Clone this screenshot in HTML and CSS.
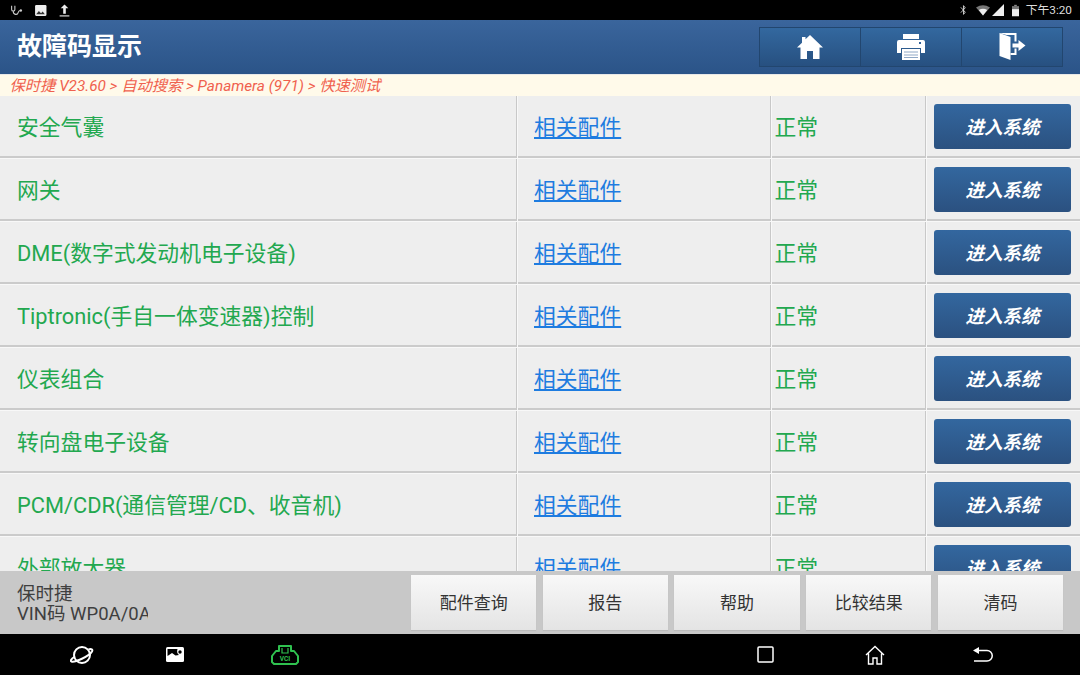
FILE: index.html
```html
<!DOCTYPE html>
<html lang="zh">
<head>
<meta charset="utf-8">
<title>故障码显示</title>
<link rel="stylesheet" href="styles.css">
</head>
<body>
<div class="app">
  <div class="status">
    <div class="status-left">
      <svg class="i12" viewBox="0 0 12 12"><path d="M1.5 1.5v3.5c0 2 3 2 3 0V1.500M3 7c0 3 4 3.500 4.500 1 .3-1.500 1-2 2-2" fill="none" stroke="#ccc" stroke-width="1"/><circle cx="10" cy="6" r="1.100" fill="#ccc"/></svg>
      <svg class="i12" viewBox="0 0 12 12"><rect x="1" y="1" width="10.500" height="10" rx="1" fill="#eee"/><path d="M2 9.500l2.500-3 2 2 1.500-1.500 2 2.500z" fill="#333"/></svg>
      <svg class="i12" viewBox="0 0 12 12"><path d="M6 .5L9.500 4H7.200v5H4.800V4H2.500z" fill="#eee"/><rect x="1.500" y="10.500" width="9" height="1" fill="#eee"/></svg>
    </div>
    <div class="status-right">
      <svg class="bt" viewBox="0 0 8 12"><path d="M1 3l5 5.500L4 11V1l2 2.500L1 9" fill="none" stroke="#ddd" stroke-width="1"/></svg>
      <svg class="wifi" viewBox="0 0 14 11"><path d="M0 2.500Q7-2 14 2.500L7 10.500z" fill="#777"/><path d="M2.800 5Q7 2.300 11.200 5L7 10.500z" fill="#eee"/></svg>
      <svg class="signal" viewBox="0 0 12 12"><path d="M12 0v12H0z" fill="#eee"/></svg>
      <svg class="battery" viewBox="0 0 8 13"><rect x="2.500" y="0" width="3" height="1.500" fill="#888"/><rect x="0" y="1.500" width="8" height="11.500" fill="#777"/><rect x="0" y="5" width="8" height="8" fill="#eee"/></svg>
      <span class="clock">下午3:20</span>
    </div>
  </div>

  <header class="header">
    <h1 class="title">故障码显示</h1>
    <div class="toolbar">
      <button class="tool">
        <svg class="home-icon" viewBox="0 0 26 24"><path d="M13 0L26 12.500h-3.500V24H16v-8h-6v8H3.500V12.500H0L5 7.700V2h3.500v2.300z" fill="#fff"/></svg>
      </button>
      <button class="tool">
        <svg class="print-icon" viewBox="0 0 28 26"><path d="M6 0h16v5H6z" fill="#fff"/><path d="M2 6h24a2 2 0 0 1 2 2v11h-4v-5H4v5H0V8a2 2 0 0 1 2-2z" fill="#fff"/><rect x="22" y="8" width="2" height="2" fill="#2f6098"/><path d="M5 15h18v11H5z" fill="#fff"/><path d="M7 18h14M7 21h14M7 23.500h14" stroke="#8fa8c6" stroke-width="1"/></svg>
      </button>
      <button class="tool">
        <svg class="exit-icon" viewBox="0 0 26 27"><path d="M0 0h17v8.500h-2V2H7zM15 15.500h2V22h-6v-2h4z" fill="#fff"/><path d="M0 0l11 4v23L0 23z" fill="#fff"/><path d="M13 10.500h6V7l7 5.500-7 5.500v-3.500h-6z" fill="#fff"/></svg>
      </button>
    </div>
  </header>

  <div class="crumb">保时捷 V23.60 &gt; 自动搜索 &gt; Panamera (971) &gt; 快速测试</div>

  <main class="list">
    <div class="row"><div class="cell name">安全气囊</div><div class="cell link"><a>相关配件</a></div><div class="cell state">正常</div><div class="cell action"><button class="enter">进入系统</button></div></div>
    <div class="row"><div class="cell name">网关</div><div class="cell link"><a>相关配件</a></div><div class="cell state">正常</div><div class="cell action"><button class="enter">进入系统</button></div></div>
    <div class="row"><div class="cell name">DME(数字式发动机电子设备)</div><div class="cell link"><a>相关配件</a></div><div class="cell state">正常</div><div class="cell action"><button class="enter">进入系统</button></div></div>
    <div class="row"><div class="cell name">Tiptronic(手自一体变速器)控制</div><div class="cell link"><a>相关配件</a></div><div class="cell state">正常</div><div class="cell action"><button class="enter">进入系统</button></div></div>
    <div class="row"><div class="cell name">仪表组合</div><div class="cell link"><a>相关配件</a></div><div class="cell state">正常</div><div class="cell action"><button class="enter">进入系统</button></div></div>
    <div class="row"><div class="cell name">转向盘电子设备</div><div class="cell link"><a>相关配件</a></div><div class="cell state">正常</div><div class="cell action"><button class="enter">进入系统</button></div></div>
    <div class="row"><div class="cell name">PCM/CDR(通信管理/CD、收音机)</div><div class="cell link"><a>相关配件</a></div><div class="cell state">正常</div><div class="cell action"><button class="enter">进入系统</button></div></div>
    <div class="row"><div class="cell name">外部放大器</div><div class="cell link"><a>相关配件</a></div><div class="cell state">正常</div><div class="cell action"><button class="enter">进入系统</button></div></div>
  </main>

  <div class="bottom">
    <div class="vehicle">
      <div>保时捷</div>
      <div>VIN码 WP0A/0A</div>
    </div>
    <div class="actions">
      <button class="act">配件查询</button>
      <button class="act">报告</button>
      <button class="act">帮助</button>
      <button class="act">比较结果</button>
      <button class="act">清码</button>
    </div>
  </div>

  <nav class="nav">
    <div class="nav-left">
      <svg class="planet" viewBox="0 0 24 20"><circle cx="12" cy="10" r="8" fill="none" stroke="#fff" stroke-width="2"/><path d="M5 11.500C1 14 0 16 1.500 16.500C5 17.500 19 11.500 22 6.500C23 4.500 21.500 3.500 18.500 4.500" fill="none" stroke="#fff" stroke-width="2"/></svg>
      <svg class="gallery" viewBox="0 0 18 15"><rect width="18" height="15" rx="1.500" fill="#fff"/><path d="M1.500 2H11.500C10.500 5 11.500 7 13 8L9.500 8.500 6 6 1.500 9z" fill="#000"/><circle cx="14" cy="5" r="1.700" fill="#000"/></svg>
      <svg class="vci" viewBox="0 0 28 20"><path d="M8 1h12v5h3l4 5v6l-2 2H3l-2-2v-6l4-5h3z" fill="none" stroke="#2fc14f" stroke-width="2" stroke-linejoin="round"/><path d="M11 3v5h6V3" fill="none" stroke="#2fc14f" stroke-width="1.200"/><text x="14" y="16" class="vci-text" text-anchor="middle">VCI</text></svg>
    </div>
    <div class="nav-right">
      <svg class="recent" viewBox="0 0 17 17"><rect x="1" y="1" width="15" height="15" rx="1" fill="none" stroke="#fff" stroke-width="1.500"/></svg>
      <svg class="homeout" viewBox="0 0 20 20"><path d="M1 10L10 1.500 19 10M3.500 8.500V19H8v-6h4v6h4.500V8.500" fill="none" stroke="#fff" stroke-width="1.400"/></svg>
      <svg class="back" viewBox="0 0 20 16"><path d="M6 0v7L0 3.500z" fill="#fff"/><path d="M5 3.500h9a4.700 4.700 0 0 1 0 10.500H1" fill="none" stroke="#fff" stroke-width="1.500"/></svg>
    </div>
  </nav>
</div>
</body>
</html>
```
FILE: styles.css
```css
* { box-sizing: border-box; }
html, body { margin: 0; padding: 0; }
body { width: 1080px; height: 675px; overflow: hidden; font-family: Roboto, "Noto Sans CJK SC", sans-serif; }
button { font-family: inherit; padding: 0; border: 0; }

.app { width: 1080px; height: 675px; display: flex; flex-direction: column; background: #fff; }

.status { height: 20px; flex: none; background: #000; display: flex; justify-content: space-between; align-items: center; padding: 0 8px 0 10px; }
.status-left { display: flex; gap: 11px; align-items: center; }
.i12 { width: 13px; height: 13px; display: block; }
.status-right { display: flex; align-items: center; }
.bt { width: 7px; height: 12px; margin-right: 9px; }
.wifi { width: 14px; height: 11px; margin-right: 2px; }
.signal { width: 12px; height: 12px; margin-right: 8px; }
.battery { width: 7px; height: 13px; margin-right: 7px; }
.clock { color: #ddd; font-size: 11.800px; line-height: 20px; }

.header { height: 54px; flex: none; background: linear-gradient(#3a659c, #2b5488); display: flex; justify-content: space-between; align-items: center; padding: 0 17px; }
.title { margin: 0; color: #fff; font-size: 25px; font-weight: 700; line-height: 54px; }
.toolbar { display: flex; margin-top: -1px; border: 1px solid #22466f; background: #22466f; gap: 1px; }
.tool { width: 100px; height: 38px; background: linear-gradient(#33689f, #275080); display: flex; align-items: center; justify-content: center; }
.home-icon { width: 26px; height: 24px; }
.print-icon { width: 28px; height: 26px; }
.exit-icon { width: 27px; height: 27px; }

.crumb { height: 22px; flex: none; background: #fffaea; color: #f0614e; font-size: 15.300px; font-style: italic; line-height: 22px; padding-left: 9.500px; border-top: 1px solid #e8e8e8; white-space: nowrap; }

.list { flex: 1; min-height: 0; overflow: hidden; background: #f8f8f8; }
.row { height: 63px; display: grid; grid-template-columns: 516px 252px 153px 153px; column-gap: 2px; }
.cell { height: 62px; padding-bottom: 2px; background: #eee; display: flex; align-items: center; font-size: 21.800px; color: #22a84f; border-bottom: 2px solid #cbcbcb; box-shadow: 1px 0 0 #c8c8c8; }
.name { padding-left: 17px; }
.link { padding-left: 16px; }
.link a { color: #1e7ce0; text-decoration: underline; }
.state { padding-left: 2.500px; }
.action { padding-left: 7px; padding-bottom: 0; }
.enter { width: 137px; height: 45px; margin-top: 1px; padding-bottom: 2px; border-radius: 3px; background: linear-gradient(#33679f, #2b5180); color: #fff; font-size: 18.500px; font-weight: 700; font-style: italic; }

.bottom { height: 63px; flex: none; background: #c8c8c8; display: flex; justify-content: space-between; padding-right: 17px; }
.vehicle { width: 131px; margin-left: 17px; padding-top: 13px; overflow: hidden; white-space: nowrap; color: #3f3f3f; font-size: 18.500px; line-height: 20px; }
.actions { display: flex; gap: 6.500px; padding-top: 4px; }
.act { width: 125.200px; height: 55px; padding-bottom: 2px; background: linear-gradient(#f8f8f8, #e4e4e4); color: #333; font-size: 17px; box-shadow: 0 1px 1px #bbb; }

.nav { height: 41px; flex: none; background: #000; display: flex; justify-content: space-between; align-items: center; padding: 0 87px 0 70px; }
.nav-left { display: flex; align-items: center; }
.planet { width: 24px; height: 20px; }
.gallery { width: 18px; height: 15px; margin-left: 72px; }
.vci { width: 28px; height: 20px; margin-left: 87px; }
.vci-text { font-family: Roboto, sans-serif; font-size: 6.500px; font-weight: 700; fill: #2fc14f; }
.nav-right { display: flex; align-items: center; }
.recent { width: 17px; height: 17px; }
.homeout { width: 20px; height: 20px; margin-left: 91px; }
.back { width: 20px; height: 16px; margin-left: 88px; }
```
